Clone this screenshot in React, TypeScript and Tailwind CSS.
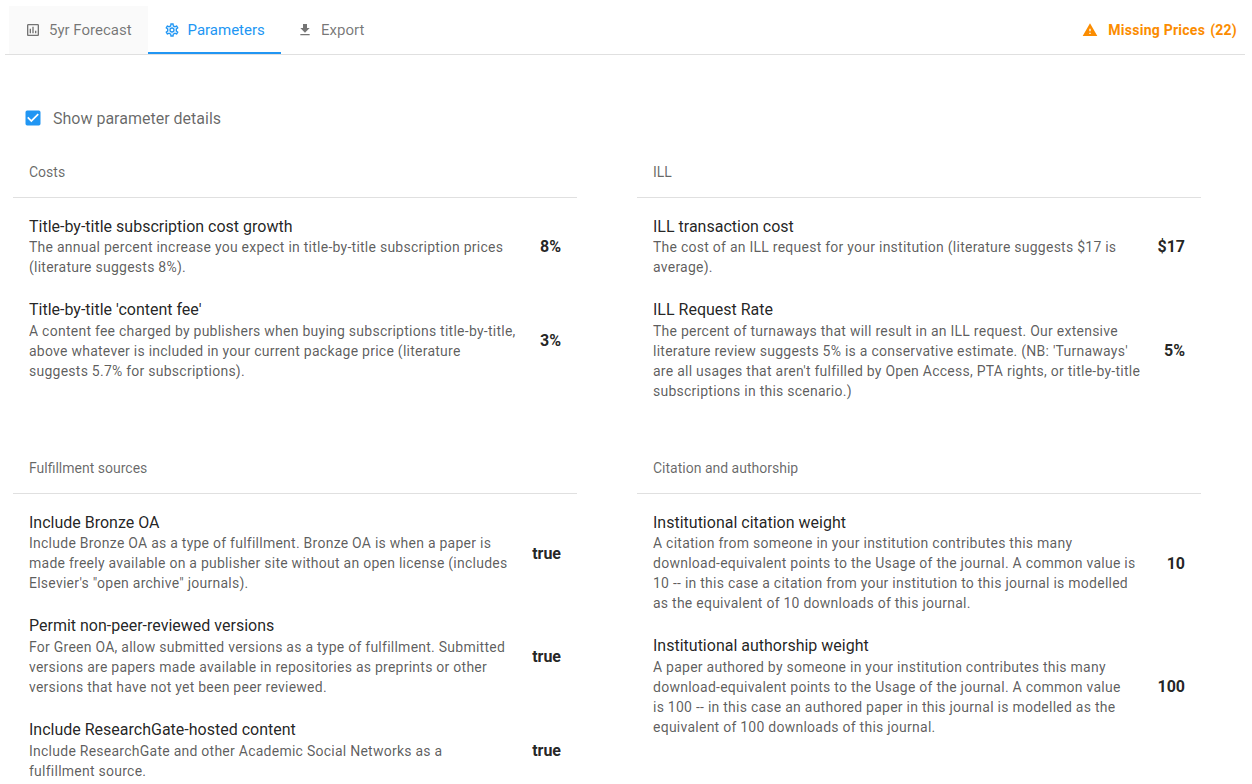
import { MdOutlineAssessment, MdDownload, MdWarning, MdCheckBox } from "react-icons/md";

type Item = { title: string; lines: string[]; value: string };

function CogOutline() {
  return (
    <svg viewBox="0 0 24 24" width="16" height="16" fill="currentColor" className="mr-2 shrink-0">
      <path d="M12,8A4,4 0 0,1 16,12A4,4 0 0,1 12,16A4,4 0 0,1 8,12A4,4 0 0,1 12,8M12,10A2,2 0 0,0 10,12A2,2 0 0,0 12,14A2,2 0 0,0 14,12A2,2 0 0,0 12,10M10,22C9.75,22 9.54,21.82 9.5,21.58L9.13,18.93C8.5,18.68 7.96,18.34 7.44,17.94L4.95,18.95C4.73,19.03 4.46,18.95 4.34,18.73L2.34,15.27C2.21,15.05 2.27,14.78 2.46,14.63L4.57,12.97L4.5,12L4.57,11L2.46,9.37C2.27,9.22 2.21,8.95 2.34,8.73L4.34,5.27C4.46,5.05 4.73,4.96 4.95,5.05L7.44,6.05C7.96,5.66 8.5,5.32 9.13,5.07L9.5,2.42C9.54,2.18 9.75,2 10,2H14C14.25,2 14.46,2.18 14.5,2.42L14.87,5.07C15.5,5.32 16.04,5.66 16.56,6.05L19.05,5.05C19.27,4.96 19.54,5.05 19.66,5.27L21.66,8.73C21.79,8.95 21.73,9.22 21.54,9.37L19.43,11L19.5,12L19.43,13L21.54,14.63C21.73,14.78 21.79,15.05 21.66,15.27L19.66,18.73C19.54,18.95 19.27,19.04 19.05,18.95L16.56,17.95C16.04,18.34 15.5,18.68 14.87,18.93L14.5,21.58C14.46,21.82 14.25,22 14,22H10M11.25,4L10.88,6.61C9.68,6.86 8.62,7.5 7.85,8.39L5.44,7.35L4.69,8.65L6.8,10.2C6.4,11.37 6.4,12.64 6.8,13.8L4.68,15.36L5.43,16.66L7.86,15.62C8.63,16.5 9.68,17.14 10.87,17.38L11.24,20H12.76L13.13,17.39C14.32,17.14 15.37,16.5 16.14,15.62L18.57,16.66L19.32,15.36L17.2,13.81C17.6,12.64 17.6,11.37 17.2,10.2L19.31,8.65L18.56,7.35L16.15,8.39C15.38,7.5 14.32,6.86 13.12,6.62L12.75,4H11.25Z" />
    </svg>
  );
}

function Row({ title, lines, value, first }: Item & { first: boolean }) {
  return (
    <div className="flex items-center justify-between px-4">
      <div className="whitespace-nowrap">
        <div className="text-[16px] leading-[19px] text-black/87">{title}</div>
        <div className={`text-[14px] leading-[20px] tracking-[0.25px] text-black/65 ${first ? "mt-px" : "mt-0.5"}`}>
          {lines.map((l) => (
            <div key={l}>{l}</div>
          ))}
        </div>
      </div>
      <div className={`text-[16px] font-bold leading-6 text-black/87 ${first && lines.length > 2 ? "pt-0.5" : ""}`}>{value}</div>
    </div>
  );
}

function Section({ title, items }: { title: string; items: Item[] }) {
  return (
    <section className="w-[564px]">
      <h2 className="flex h-12 items-center px-4 text-[14px] text-black/60">{title}</h2>
      <div className="mt-px h-px bg-black/12" />
      <div className="flex flex-col gap-[23px] pt-[19px]">
        {items.map((item, i) => (
          <Row key={item.title} {...item} first={i === 0} />
        ))}
      </div>
    </section>
  );
}

const costs: Item[] = [
  { title: "Title-by-title subscription cost growth", value: "8%", lines: ["The annual percent increase you expect in title-by-title subscription prices", "(literature suggests 8%)."] },
  { title: "Title-by-title 'content fee'", value: "3%", lines: ["A content fee charged by publishers when buying subscriptions title-by-title,", "above whatever is included in your current package price (literature", "suggests 5.7% for subscriptions)."] },
];
const ill: Item[] = [
  { title: "ILL transaction cost", value: "$17", lines: ["The cost of an ILL request for your institution (literature suggests $17 is", "average)."] },
  { title: "ILL Request Rate", value: "5%", lines: ["The percent of turnaways that will result in an ILL request. Our extensive", "literature review suggests 5% is a conservative estimate. (NB: 'Turnaways'", "are all usages that aren't fulfilled by Open Access, PTA rights, or title-by-title", "subscriptions in this scenario.)"] },
];
const sources: Item[] = [
  { title: "Include Bronze OA", value: "true", lines: ["Include Bronze OA as a type of fulfillment. Bronze OA is when a paper is", "made freely available on a publisher site without an open license (includes", "Elsevier's \"open archive\" journals)."] },
  { title: "Permit non-peer-reviewed versions", value: "true", lines: ["For Green OA, allow submitted versions as a type of fulfillment. Submitted", "versions are papers made available in repositories as preprints or other", "versions that have not yet been peer reviewed."] },
  { title: "Include ResearchGate-hosted content", value: "true", lines: ["Include ResearchGate and other Academic Social Networks as a", "fulfillment source."] },
];
const citation: Item[] = [
  { title: "Institutional citation weight", value: "10", lines: ["A citation from someone in your institution contributes this many", "download-equivalent points to the Usage of the journal. A common value is", "10 -- in this case a citation from your institution to this journal is modelled", "as the equivalent of 10 downloads of this journal."] },
  { title: "Institutional authorship weight", value: "100", lines: ["A paper authored by someone in your institution contributes this many", "download-equivalent points to the Usage of the journal. A common value", "is 100 -- in this case an authored paper in this journal is modelled as the", "equivalent of 100 downloads of this journal."] },
];

export default function App() {
  return (
    <div className="h-[784px] w-[1252px] overflow-hidden bg-white pt-[6px] font-['Roboto',sans-serif]">
      <div className="ml-[5px] flex h-[49px] w-[1240px] border-b border-black/12 pl-1 text-[15px] text-black/54">
        <div className="flex w-[139px] items-center bg-[#fafafa] pl-4"><MdOutlineAssessment size={16} className="mr-2" />5yr Forecast</div>
        <div className="flex w-[133px] items-center border-b-2 border-[#2196f3] pt-0.5 pl-[15.5px] text-[#2196f3]"><CogOutline />Parameters</div>
        <div className="flex flex-1 items-center pl-4"><MdDownload size={16} className="mr-2" />Export</div>
        <div className="flex items-center pr-2 text-[14px] font-bold tracking-[0.25px] text-[#fb8c00]"><MdWarning size={16} className="mr-[10px]" />Missing Prices<span className="ml-[5px]">(22)</span></div>
      </div>
      <div className="flex h-[93px] items-start pt-[52px] pl-[23px] text-[16px] leading-6 text-black/60"><MdCheckBox size={20} className="mt-px mr-[10px] text-[#2196f3]" />Show parameter details</div>
      <div className="grid grid-cols-[624px_564px] grid-rows-[296px_1fr] pl-[13px]">
        <Section title="Costs" items={costs} />
        <Section title="ILL" items={ill} />
        <Section title="Fulfillment sources" items={sources} />
        <Section title="Citation and authorship" items={citation} />
      </div>
    </div>
  );
}
